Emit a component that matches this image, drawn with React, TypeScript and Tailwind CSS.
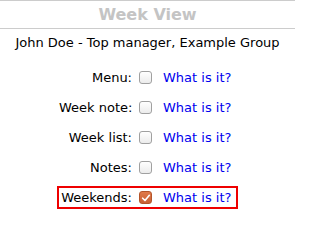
import React from 'react';

const rows = [
  { label: 'Menu:', checked: false },
  { label: 'Week note:', checked: false },
  { label: 'Week list:', checked: false },
  { label: 'Notes:', checked: false },
  { label: 'Weekends:', checked: true, highlight: true },
];

const Box = ({ checked }: { checked: boolean }) =>
  checked ? (
    <span className="flex h-[13px] w-[13px] items-center justify-center rounded-[3px] border border-[#b4542a] bg-gradient-to-b from-[#e07a4a] to-[#c95f33]">
      <svg viewBox="0 0 12 12" className="h-[10px] w-[10px]">
        <path d="M2 6.3 L4.8 9 L10 2.8" fill="none" stroke="white" strokeWidth="2" strokeLinecap="round" strokeLinejoin="round" />
      </svg>
    </span>
  ) : (
    <span className="block h-[13px] w-[13px] rounded-[3px] border border-[#a0a0a0] bg-gradient-to-b from-white to-[#ececec]" />
  );

const App = () => {
  return (
    <div className="h-[213px] w-[295px] overflow-hidden bg-white font-['DejaVu_Sans',sans-serif] text-[13px] text-black">
      <div className="flex h-[29px] items-center justify-center border-t border-b border-[#cccccc]">
        <h1 className="text-[16px] font-bold leading-none text-[#c4c4c4]">Week View</h1>
      </div>
      <p className="mt-[6px] whitespace-nowrap text-center leading-[16px]">John Doe - Top manager, Example Group</p>

      <div className="mx-auto mt-[15px] flex w-[181px] flex-col gap-[7px]">
        {rows.map((row) => (
          <div
            key={row.label}
            className={`flex h-[23px] items-center whitespace-nowrap border-2 ${row.highlight ? 'border-[#ee0000]' : 'border-transparent'}`}
          >
            <span className="w-[73px] shrink-0 text-right leading-none">{row.label}</span>
            <span className="ml-[7px] shrink-0">
              <Box checked={row.checked} />
            </span>
            <a href="#" className="ml-[11px] leading-none text-[#0000ee]">
              What is it?
            </a>
          </div>
        ))}
      </div>
    </div>
  );
};

export default App;
